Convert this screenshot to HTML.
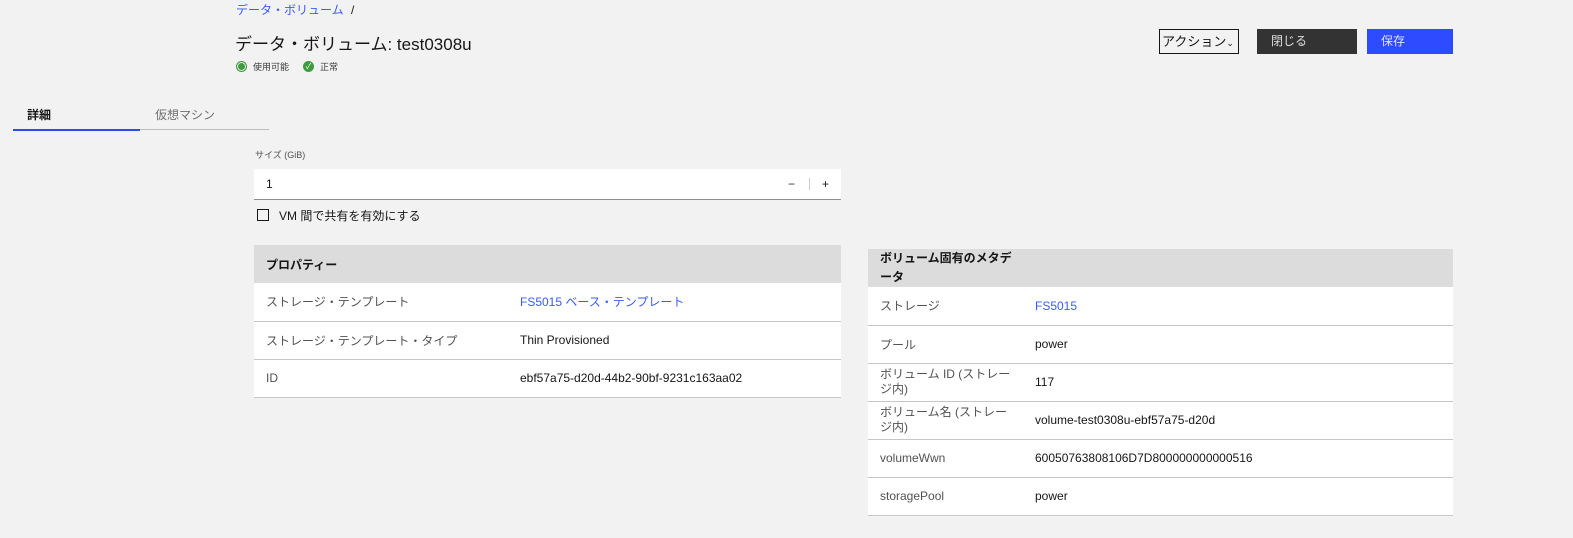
<!DOCTYPE html>
<html><head><meta charset="utf-8"><style>
*{margin:0;padding:0;box-sizing:border-box}
body{width:1573px;height:538px;background:#f2f2f2;font-family:"Liberation Sans","Noto Sans CJK JP",sans-serif;color:#161616;position:relative;overflow:hidden}
.a{position:absolute}
.lnk{color:#3a5bff}
table{border-collapse:collapse;position:absolute;background:#fff}
th{background:#dcdcdc;text-align:left;font-size:12px;font-weight:bold;padding:0 12px;height:38px}
td{font-size:12px;height:38px;border-bottom:1px solid #c6c6c6;padding:0 12px;vertical-align:middle}
td.k{color:#525252}
</style></head><body>
<div class="a lnk" style="left:236px;top:1px;font-size:12px">データ・ボリューム <span style="color:#161616;margin-left:4px">/</span></div>
<div class="a" style="left:235px;top:30px;font-size:17px">データ・ボリューム: test0308u</div>
<div class="a" style="left:236px;top:60px;font-size:9px;color:#393939;display:flex;align-items:center">
<span style="width:11px;height:11px;border-radius:50%;background:#3e9c3e;box-shadow:0 0 0 1px #f2f2f2 inset,0 0 0 2px #3e9c3e inset;display:inline-block;border:1px solid #3e9c3e"></span><span style="margin-left:6px">使用可能</span>
<span style="margin-left:14px;width:11px;height:11px;border-radius:50%;background:#3e9c3e;display:inline-flex;align-items:center;justify-content:center;color:#fff;font-size:8px">✓</span><span style="margin-left:6px">正常</span></div>
<div class="a" style="left:1159px;top:29px;width:80px;height:25px;border:1px solid #161616;font-size:13px;line-height:23px;padding-left:2px">アクション<span style="font-size:9px">⌄</span></div>
<div class="a" style="left:1257px;top:29px;width:100px;height:25px;background:#333;color:#ddd;font-size:12px;line-height:25px;padding-left:14px">閉じる</div>
<div class="a" style="left:1367px;top:29px;width:86px;height:25px;background:#2e4bff;color:#dfe4ff;font-size:12px;line-height:25px;padding-left:14px">保存</div>
<div class="a" style="left:27px;top:106px;font-size:12px;font-weight:bold">詳細</div>
<div class="a" style="left:155px;top:106px;font-size:12px;color:#6f6f6f">仮想マシン</div>
<div class="a" style="left:13px;top:129px;width:127px;height:2px;background:#2b4fe0"></div>
<div class="a" style="left:140px;top:129px;width:129px;height:1px;background:#bcbcbc"></div>
<div class="a" style="left:255px;top:148px;font-size:9px;color:#525252">サイズ (GiB)</div>
<div class="a" style="left:254px;top:169px;width:587px;height:31px;background:#fff;border-bottom:1px solid #8d8d8d;font-size:12px;line-height:31px;padding-left:12px">1
<span class="a" style="left:534px;top:0;color:#333">−</span><span class="a" style="left:555px;top:9px;width:1px;height:12px;background:#ccc"></span><span class="a" style="left:568px;top:0">+</span></div>
<div class="a" style="left:257px;top:209px;width:12px;height:12px;border:1px solid #161616"></div>
<div class="a" style="left:279px;top:207px;font-size:12px">VM 間で共有を有効にする</div>
<table style="left:254px;top:245px;width:587px">
<tr><th colspan="2">プロパティー</th></tr>
<tr><td class="k" style="width:254px">ストレージ・テンプレート</td><td class="lnk">FS5015 ベース・テンプレート</td></tr>
<tr><td class="k">ストレージ・テンプレート・タイプ</td><td>Thin Provisioned</td></tr>
<tr><td class="k">ID</td><td>ebf57a75-d20d-44b2-90bf-9231c163aa02</td></tr>
</table>
<table style="left:868px;top:249px;width:585px">
<tr><th colspan="2" style="line-height:19px">ボリューム固有のメタデ<br>ータ</th></tr>
<tr><td class="k" style="width:155px">ストレージ</td><td class="lnk">FS5015</td></tr>
<tr><td class="k">プール</td><td>power</td></tr>
<tr><td class="k" style="line-height:15px">ボリューム ID (ストレー<br>ジ内)</td><td>117</td></tr>
<tr><td class="k" style="line-height:15px">ボリューム名 (ストレー<br>ジ内)</td><td>volume-test0308u-ebf57a75-d20d</td></tr>
<tr><td class="k">volumeWwn</td><td>60050763808106D7D800000000000516</td></tr>
<tr><td class="k">storagePool</td><td>power</td></tr>
</table>
</body></html>
